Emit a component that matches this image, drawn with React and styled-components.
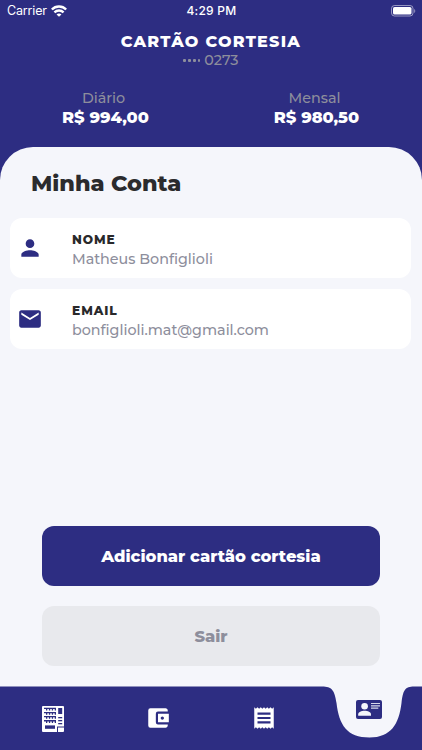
import React from "react";
import styled, { createGlobalStyle } from "styled-components";
import { MdPerson, MdEmail, MdReceipt, MdAccountBalanceWallet } from "react-icons/md";

const navy = "#2d2d82";
const paper = "#f5f6fb";
const muted = "#8d8e9c";

const Global = createGlobalStyle`
  * { box-sizing: border-box; }
  body { margin: 0; background: ${paper}; }
`;

const Screen = styled.div`
  width: 422px;
  height: 750px;
  display: flex;
  flex-direction: column;
  overflow: hidden;
  background: ${navy};
  font-family: Montserrat, Inter, sans-serif;
  white-space: nowrap;
`;

const StatusBar = styled.div`
  height: 22px;
  padding: 0 6px 0 7px;
  display: grid;
  grid-template-columns: 1fr auto 1fr;
  align-items: center;
  color: #fff;
  font: 400 12.5px/22px Inter, sans-serif;
`;

const Carrier = styled.div`
  display: flex;
  align-items: center;
  gap: 4px;
  letter-spacing: -0.15px;
`;

const Time = styled.div`
  font-weight: 500;
  font-size: 12px;
  letter-spacing: 0.25px;
`;

const BatterySlot = styled.div`
  display: flex;
  justify-content: flex-end;
`;

const Header = styled.header`
  height: 125px;
  display: flex;
  flex-direction: column;
  align-items: center;
  padding-top: 10px;
`;

const CardName = styled.h1`
  margin: 0;
  color: #fff;
  font-size: 16px;
  line-height: 20px;
  font-weight: 800;
  letter-spacing: 1.25px;
`;

const CardNumber = styled.div`
  display: flex;
  align-items: center;
  gap: 4px;
  color: ${muted};
  font-size: 14.3px;
  line-height: 17px;
  font-weight: 500;
`;

const Dots = styled.span`
  display: flex;
  gap: 2px;
`;

const Dot = styled.i`
  width: 2.7px;
  height: 2.7px;
  border-radius: 1px;
  background: ${muted};
`;

const Limits = styled.div`
  align-self: stretch;
  display: grid;
  grid-template-columns: 1fr 1fr;
  margin-top: 20px;
`;

const Limit = styled.div`
  display: flex;
  flex-direction: column;
  align-items: center;
  color: #fff;
  font-size: 16.3px;
  line-height: 19px;
  font-weight: 800;
`;

const LimitLabel = styled.span`
  padding-right: 4px;
  color: ${muted};
  font-size: 14.3px;
  font-weight: 500;
`;

const Sheet = styled.main`
  flex: 1;
  display: flex;
  flex-direction: column;
  padding: 0 11px 20px 10px;
  background: ${paper};
  border-radius: 33px 33px 0 0;
`;

const Title = styled.h2`
  margin: 21px 0 20px 21px;
  color: #2b2b2d;
  font-size: 22.4px;
  line-height: 30px;
  font-weight: 800;
`;

const InfoList = styled.div`
  display: flex;
  flex-direction: column;
  gap: 11px;
`;

const InfoCard = styled.section`
  height: 60px;
  display: flex;
  align-items: center;
  gap: 29px;
  padding: 3px 0 0 7px;
  background: #fff;
  border-radius: 12px;
  svg { width: 26px; height: 26px; color: ${navy}; margin-bottom: 3px; }
`;

const InfoLabel = styled.div`
  color: #29292b;
  font-size: 12.2px;
  line-height: 18px;
  font-weight: 800;
  letter-spacing: 0.95px;
`;

const InfoValue = styled.div`
  color: ${muted};
  font-size: 14.3px;
  line-height: 20px;
  font-weight: 500;
`;

const Actions = styled.div`
  margin: auto 31px 0 32px;
  display: flex;
  flex-direction: column;
  gap: 20px;
`;

const Button = styled.button`
  height: 60px;
  border: 0;
  border-radius: 12px;
  padding: 0;
  color: ${(p) => (p.$quiet ? muted : "#fff")};
  background: ${(p) => (p.$quiet ? "#e8e9ed" : navy)};
  font: 800 16.35px/20px Montserrat, Inter, sans-serif;
`;

const TabBar = styled.nav`
  position: relative;
  height: 64px;
  display: grid;
  grid-template-columns: repeat(4, 105.5px);
  background: ${paper};
`;

const BarShape = styled.svg`
  position: absolute;
  inset: 0;
`;

const Tab = styled.div`
  position: relative;
  display: flex;
  align-items: center;
  justify-content: center;
  padding-bottom: ${(p) => (p.$active ? 17 : 0)}px;
  padding-top: ${(p) => (p.$low ? 2 : 0)}px;
  color: ${(p) => (p.$active ? navy : "#fff")};
`;

const Wifi = () => (
  <svg width="16" height="12" viewBox="0 0 15 11" fill="none" stroke="#fff" strokeWidth="2.2">
    <path d="M.8 4.1C4.4.3 10.6.3 14.2 4.1M3.2 6.8c2.4-2.3 6.2-2.3 8.6 0" />
    <path d="M5.2 8.7c1.3-1.2 3.3-1.2 4.6 0L7.5 11z" fill="#fff" stroke="none" />
  </svg>
);

const Battery = () => (
  <svg width="25" height="12" viewBox="0 0 25 12">
    <rect x=".5" y=".5" width="21.5" height="10.5" rx="3" fill="none" stroke="#fff" strokeOpacity=".5" />
    <rect x="2" y="2" width="18.5" height="7.5" rx="1.6" fill="#fff" />
    <path d="M23.2 4v4c1.4-.7 1.4-3.3 0-4z" fill="#fff" fillOpacity=".5" />
  </svg>
);

const shelves = [1.8, 5.9, 10, 14.1];

const Vending = () => (
  <svg width="22" height="26" viewBox="0 0 22 26">
    <rect width="22" height="26" rx="1" fill="#fff" />
    <g fill={navy}>
      {shelves.map((y) => (
        <path key={y} d={`M2 ${y}h12v2.8h-1.3v-1.5h-1.6v1.5H9.8v-1.5H8.2v1.5H6.9v-1.5H5.3v1.5H4v-1.5H2z`} />
      ))}
      <rect x="3" y="19.4" width="10" height="3.4" />
      <rect x="16.2" y="2" width="4" height="6" />
      <rect x="16.2" y="11" width="4" height="1.3" />
      <rect x="16.2" y="14" width="4" height="1.3" />
      <rect x="16.2" y="17" width="4" height="1.3" />
      <path d="M15 26v-5.5h7v1h-6V26z" />
    </g>
  </svg>
);

const IdCard = () => (
  <svg width="26" height="19" viewBox="0 0 26 19">
    <rect width="26" height="19" rx="2" fill={navy} />
    <g fill={paper}>
      <circle cx="8.6" cy="6.3" r="3.3" />
      <path d="M2.2 15.8v-1.4c0-2.2 3.2-3.6 6.4-3.6s6.4 1.4 6.4 3.6v1.4z" />
      <path d="M15 3h9v1.1h-9zM15 5.3h9v1.1h-9zM15 7.6h7.3v1.1H15z" fillOpacity=".85" />
    </g>
  </svg>
);

export default function App() {
  return (
    <Screen>
      <Global />
      <StatusBar>
        <Carrier>Carrier <Wifi /></Carrier>
        <Time>4:29 PM</Time>
        <BatterySlot><Battery /></BatterySlot>
      </StatusBar>
      <Header>
        <CardName>CARTÃO CORTESIA</CardName>
        <CardNumber>
          <Dots><Dot /><Dot /><Dot /><Dot /></Dots>
          0273
        </CardNumber>
        <Limits>
          <Limit><LimitLabel>Diário</LimitLabel>R$ 994,00</Limit>
          <Limit><LimitLabel>Mensal</LimitLabel>R$ 980,50</Limit>
        </Limits>
      </Header>
      <Sheet>
        <Title>Minha Conta</Title>
        <InfoList>
          <InfoCard>
            <MdPerson />
            <div>
              <InfoLabel>NOME</InfoLabel>
              <InfoValue>Matheus Bonfiglioli</InfoValue>
            </div>
          </InfoCard>
          <InfoCard>
            <MdEmail />
            <div>
              <InfoLabel>EMAIL</InfoLabel>
              <InfoValue>bonfiglioli.mat@gmail.com</InfoValue>
            </div>
          </InfoCard>
        </InfoList>
        <Actions>
          <Button>Adicionar cartão cortesia</Button>
          <Button $quiet>Sair</Button>
        </Actions>
      </Sheet>
      <TabBar>
        <BarShape width="422" height="64" viewBox="0 0 422 64">
          <path
            d="M0 .5H322C332 .5 334.5 4 336.5 17C339 39 347 51.5 369.5 51.5C391 51.5 399 38 401.5 17C403 4 405 .5 414 .5H422V64H0Z"
            fill={navy}
          />
        </BarShape>
        <Tab $low><Vending /></Tab>
        <Tab><MdAccountBalanceWallet size={26} /></Tab>
        <Tab><MdReceipt size={26} /></Tab>
        <Tab $active><IdCard /></Tab>
      </TabBar>
    </Screen>
  );
}
